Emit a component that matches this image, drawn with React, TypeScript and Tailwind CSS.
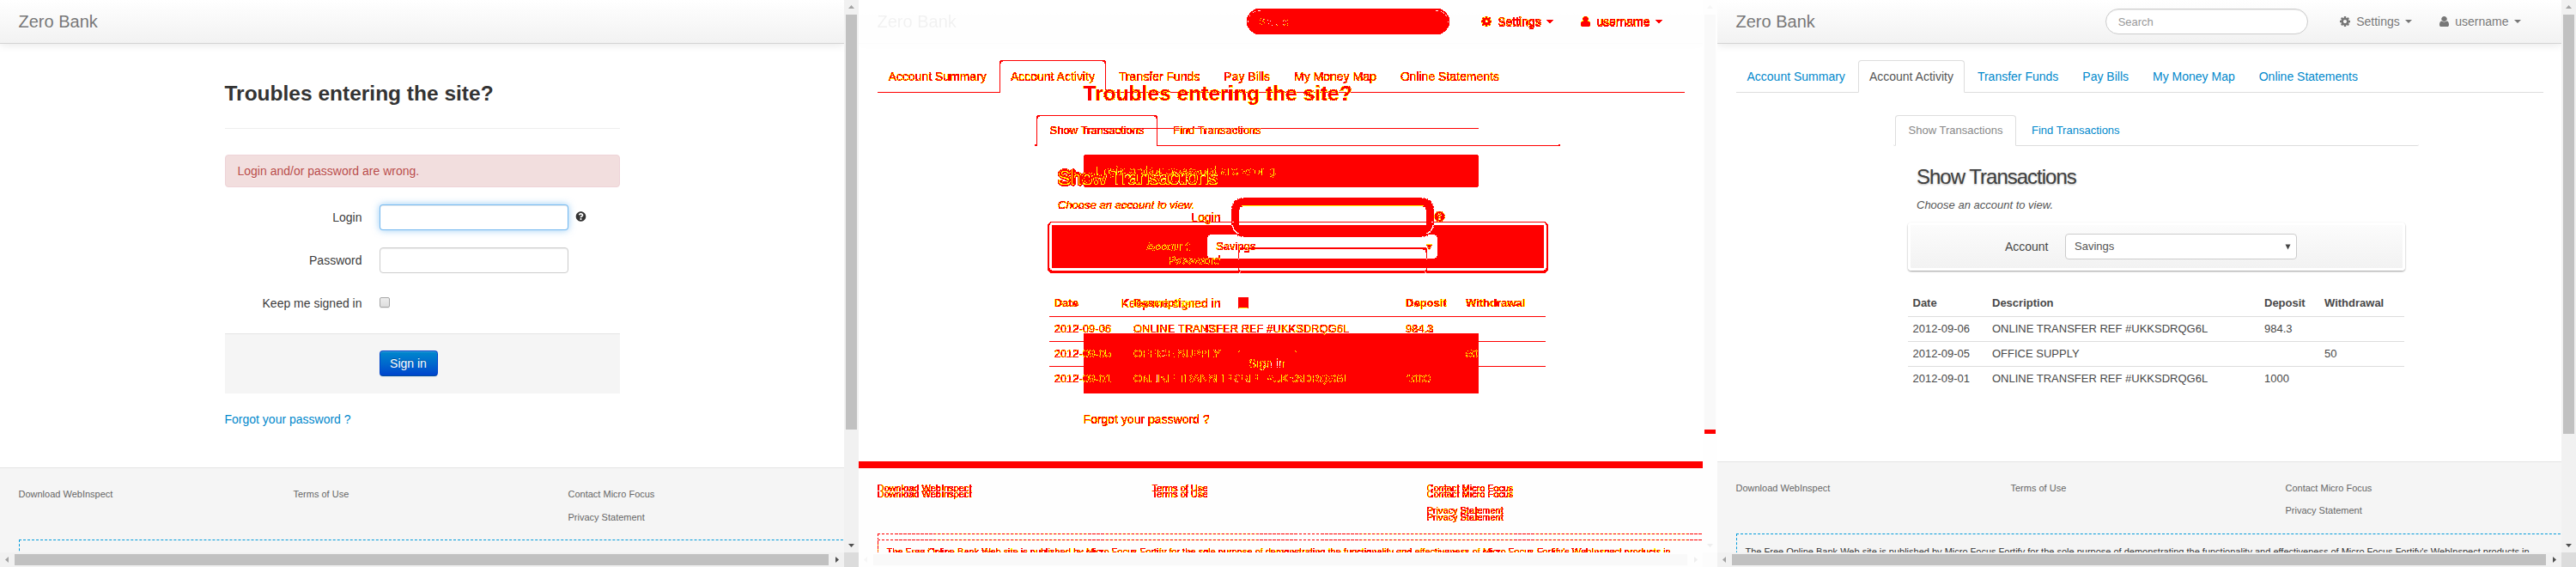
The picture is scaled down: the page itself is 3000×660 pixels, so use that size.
import React from "react";
import { FaQuestionCircle } from "react-icons/fa";

function CogIcon() {
  return (
    <svg viewBox="0 128 1536 1536" className="h-[12px] w-[12px]" fill="currentColor">
      <path d="M1024 896q0-106-75-181t-181-75-181 75-75 181 75 181 181 75 181-75 75-181zm512-109v222q0 12-8 23t-20 13l-185 28q-19 54-39 91 35 50 107 138 10 12 10 25t-9 23q-27 37-99 108t-94 71q-12 0-26-9l-138-108q-44 23-91 38-16 136-29 186-7 28-36 28h-222q-14 0-24.5-8.5t-11.5-21.5l-28-184q-49-16-90-37l-141 107q-10 9-25 9-14 0-25-11-126-114-165-168-7-10-7-23 0-12 8-23 15-21 51-66.5t54-70.5q-27-50-41-99l-183-27q-13-2-21-12.5t-8-23.5v-222q0-12 8-23t19-13l186-28q14-46 39-92-40-57-107-138-10-12-10-24 0-10 9-23 26-36 98.5-107.5t94.5-71.5q13 0 26 10l138 107q44-23 91-38 16-136 29-186 7-28 36-28h222q14 0 24.5 8.5t11.5 21.5l28 184q49 16 90 37l142-107q9-9 24-9 13 0 25 10 129 119 165 170 7 8 7 22 0 12-8 23-15 21-51 66.5t-54 70.5q26 50 41 98l183 28q13 2 21 12.5t8 23.5z" />
    </svg>
  );
}

function UserIcon() {
  return (
    <svg viewBox="0 128 1280 1536" className="h-[12px] w-[11px]" preserveAspectRatio="none" fill="currentColor">
      <path d="M1280 1399q0 109-62.5 187t-150.5 78h-854q-88 0-150.5-78t-62.5-187q0-85 8.5-160.5t31.5-152 58.5-131 94-89 134.5-34.5q131 128 313 128t313-128q76 0 134.5 34.5t94 89 58.5 131 31.5 152 8.5 160.5zm-256-887q0 159-112.5 271.5t-271.5 112.5-271.5-112.5-112.5-271.5 112.5-271.5 271.5-112.5 271.5 112.5 112.5 271.5z" />
    </svg>
  );
}

function Caret() {
  return <span className="h-0 w-0 border-x-4 border-t-4 border-x-transparent border-t-[#777]" />;
}

function Arrow({ points, dim }: { points: string; dim?: boolean }) {
  return (
    <svg viewBox="0 0 17 17" className="h-[17px] w-[17px] shrink-0">
      <polygon points={points} fill={dim ? "#a3a3a3" : "#505050"} />
    </svg>
  );
}

/* Browser window: content area plus both scroll bars. */
function Viewport({ children, long }: { children: React.ReactNode; long?: boolean }) {
  return (
    <div className="grid h-[660px] w-[1000px] shrink-0 grid-cols-[983px_17px] grid-rows-[643px_17px] bg-white font-['Liberation_Sans',Arial,sans-serif] text-[14px] leading-[20px] text-[#3c3c3c]">
      <div className="flex flex-col overflow-hidden bg-white">{children}</div>
      <div className="flex flex-col bg-[#f1f1f1]">
        <Arrow points="5,10 12,10 8.5,6" dim />
        <div className={long ? "mx-[2px] h-[488px] bg-[#c1c1c1]" : "mx-[2px] h-[483px] bg-[#c1c1c1]"} />
        <div className="flex-1" />
        <Arrow points="5,7 12,7 8.5,11" />
      </div>
      <div className="flex items-center bg-[#f1f1f1]">
        <Arrow points="10,5 10,12 6,8.5" dim />
        <div className="h-[13px] w-[948px] bg-[#c1c1c1]" />
        <div className="flex-1" />
        <Arrow points="7,5 7,12 11,8.5" />
      </div>
      <div className="bg-[#dcdcdc]" />
    </div>
  );
}

function Navbar({ children }: { children?: React.ReactNode }) {
  return (
    <header className="h-[51px] shrink-0 border-b border-[#d4d4d4] bg-linear-to-b from-white to-[#f2f2f2] text-[#777] shadow-[0_1px_10px_rgba(0,0,0,0.1)] [text-shadow:0_1px_0_#fff]">
      <div className="mx-auto flex h-[50px] w-[940px] items-center">
        <span className="text-[20px]">Zero Bank</span>
        {children}
      </div>
    </header>
  );
}

function Footer({ gap, notice }: { gap: string; notice: string }) {
  return (
    <footer className="flex-1 shrink-0 border-t border-[#e5e5e5] bg-[#f5f5f5] pt-[20px] pl-[21.5px] text-[11px] text-[#666]">
      <div className="flex">
        <span className="w-[320px]">Download WebInspect</span>
        <span className="w-[320px]">Terms of Use</span>
        <div className={`flex flex-col ${gap}`}>
          <span>Contact Micro Focus</span>
          <span>Privacy Statement</span>
        </div>
      </div>
      <p className={`h-[90px] w-[1000px] border border-dashed border-[#049cdb] p-[10px] whitespace-nowrap text-[#333] ${notice}`}>
        The Free Online Bank Web site is published by Micro Focus Fortify for the sole purpose of demonstrating the
        functionality and effectiveness of Micro Focus Fortify's WebInspect products in
      </p>
    </footer>
  );
}

function LoginPage() {
  return (
    <Viewport>
      <Navbar />
      <main className="mx-auto h-[493px] w-[460px] shrink-0 pt-[38px]">
        <h3 className="text-[24.5px] leading-[40px] font-bold text-[#333]">Troubles entering the site?</h3>
        <div className="mt-5 h-px bg-[#eee]" />
        <div className="mt-[30px] rounded border border-[#eed3d7] bg-[#f2dede] px-[14px] py-2 text-[#b94a48] [text-shadow:0_1px_0_rgba(255,255,255,0.5)]">
          Login and/or password are wrong.
        </div>
        <div className="mt-5 flex h-[30px] items-center">
          <label className="mr-5 w-[160px] text-right">Login</label>
          <input
            readOnly
            className="h-[30px] w-[220px] rounded border border-[#52a8ec]/80 bg-white shadow-[inset_0_1px_1px_rgba(0,0,0,0.075),0_0_8px_rgba(82,168,236,0.6)]"
          />
          <FaQuestionCircle className="mb-[2px] ml-2 h-[12px] w-[13px] text-[#333]" />
        </div>
        <div className="mt-5 flex h-[30px] items-center">
          <label className="mr-5 w-[160px] text-right">Password</label>
          <input
            readOnly
            className="h-[30px] w-[220px] rounded border border-[#ccc] bg-white shadow-[inset_0_1px_1px_rgba(0,0,0,0.075)]"
          />
        </div>
        <div className="mt-5 flex h-[30px] items-center">
          <label className="mr-5 w-[160px] text-right">Keep me signed in</label>
          <span className="mb-[3px] h-[12px] w-[12px] rounded-[2px] border border-[#a6a6a6] bg-linear-to-b from-[#ededed] to-[#dedede] shadow-[0_1px_0_rgba(0,0,0,0.08)]" />
        </div>
        <div className="mt-5 h-[70px] border-t border-[#e5e5e5] bg-[#f5f5f5] pt-[19px] pl-[180px]">
          <button className="block h-[30px] w-[68px] rounded border border-[#04c] border-b-[#002a80]/60 bg-linear-to-b from-[#08c] to-[#04c] text-white shadow-[inset_0_1px_0_rgba(255,255,255,0.2),0_1px_2px_rgba(0,0,0,0.05)] [text-shadow:0_-1px_0_rgba(0,0,0,0.25)]">
            Sign in
          </button>
        </div>
        <a className="mt-5 block text-[#08c]">Forgot your password ?</a>
      </main>
      <Footer gap="gap-[7px]" notice="mt-[16px]" />
    </Viewport>
  );
}

const tabs = ["Account Summary", "Account Activity", "Transfer Funds", "Pay Bills", "My Money Map", "Online Statements"];

const rows = [
  ["2012-09-06", "ONLINE TRANSFER REF #UKKSDRQG6L", "984.3", ""],
  ["2012-09-05", "OFFICE SUPPLY", "", "50"],
  ["2012-09-01", "ONLINE TRANSFER REF #UKKSDRQG6L", "1000", ""],
];

function AccountPage() {
  return (
    <Viewport long>
      <Navbar>
        <input
          readOnly
          placeholder="Search"
          className="ml-auto h-[30px] w-[236px] rounded-[15px] border border-[#ccc] bg-white px-[14px] text-[13px] shadow-[inset_0_1px_1px_rgba(0,0,0,0.075)] placeholder:text-[#999] [text-shadow:none]"
        />
        <div className="ml-[37.5px] flex items-center">
          <CogIcon />
          <span className="mr-[6px] ml-[7px]">Settings</span>
          <Caret />
        </div>
        <div className="mr-[26px] ml-[32px] flex items-center">
          <UserIcon />
          <span className="mr-[6px] ml-[7.5px]">username</span>
          <Caret />
        </div>
      </Navbar>
      <main className="mx-auto h-[486px] w-[940px] shrink-0 pt-[19px] text-[#484848]">
        <nav className="flex h-[38px] border-b border-[#ddd]">
          {tabs.map((tab) => (
            <a
              key={tab}
              className={
                tab === "Account Activity"
                  ? "mr-[2px] h-[38px] rounded-t border border-[#ddd] border-b-white bg-white px-3 py-2 text-[#555]"
                  : "mr-[2px] h-[38px] border border-transparent px-3 py-2 text-[#08c]"
              }
            >
              {tab}
            </a>
          ))}
        </nav>
        <div className="mt-[26px] ml-[182.5px] w-[614px]">
          <nav className="mx-[1px] flex h-[36px] rounded-b-[2px] border-b border-[#ddd] pl-[2px] text-[13px]">
            <a className="h-[36px] w-[141px] rounded-t border border-[#ddd] border-b-white bg-white py-[7px] text-center text-[#888]">
              Show Transactions
            </a>
            <a className="h-[36px] px-[18px] py-2 text-[#08c]">Find Transactions</a>
          </nav>
          <section className="mr-[18px] ml-[18px]">
            <h2 className="mt-[18px] ml-[10px] text-[24px] leading-[36px] tracking-[-1px] text-[#404040] [text-shadow:0_1px_2px_rgba(0,0,0,0.3)]">
              Show Transactions
            </h2>
            <p className="mt-[5px] ml-[10px] text-[13px] text-[#555] italic">Choose an account to view.</p>
            <div className="mt-[10px] flex h-[56px] w-[579px] items-center rounded border-[3px] border-white bg-linear-to-b from-[#fcfcfc] to-[#f2f2f2] bg-clip-padding shadow-[0_1px_2px_rgba(0,0,0,0.4)]">
              <label className="w-[160.5px] text-right">Account</label>
              <div className="ml-[19.5px] flex h-[30px] w-[270px] items-center justify-between rounded border border-[#ccc] bg-white pr-[6px] pl-[10px] text-[13px] text-[#555]">
                <span>Savings</span>
                <svg viewBox="0 0 7 7" className="h-[7px] w-[7px]">
                  <polygon points="0.5,0.5 6.5,0.5 3.5,6.5" fill="#444" />
                </svg>
              </div>
            </div>
            <table className="mt-6 w-[578px] table-fixed border-collapse text-left text-[13px]">
              <colgroup>
                <col className="w-[92.5px]" />
                <col className="w-[317px]" />
                <col className="w-[70px]" />
                <col className="w-[98.5px]" />
              </colgroup>
              <thead>
                <tr className="h-[29px]">
                  {["Date", "Description", "Deposit", "Withdrawal"].map((h) => (
                    <th key={h} className="px-[5.5px] py-1 font-bold">
                      {h}
                    </th>
                  ))}
                </tr>
              </thead>
              <tbody>
                {rows.map((row) => (
                  <tr key={row[0]} className="h-[29px] border-t border-[#ddd]">
                    {row.map((cell, i) => (
                      <td key={i} className="px-[5.5px] py-1 whitespace-nowrap">
                        {cell}
                      </td>
                    ))}
                  </tr>
                ))}
              </tbody>
            </table>
          </section>
        </div>
      </main>
      <Footer gap="gap-[6px]" notice="mt-[17px]" />
    </Viewport>
  );
}

/*
 * Pixel comparison of two pages. The first page is carried in the red channel and
 * the second in the green one; the filter paints changed pixels red, anti-aliased
 * changes yellow, and everything else as a faded version of the second page.
 */
function DiffFilters() {
  return (
    <svg width="0" height="0" className="absolute">
      <defs>
        <filter id="to-red" x="0" y="0" width="100%" height="100%" colorInterpolationFilters="sRGB">
          <feColorMatrix values="0.299 0.587 0.114 0 0  0 0 0 0 0  0 0 0 0 0  0 0 0 0 1" />
        </filter>
        <filter id="to-green" x="0" y="0" width="100%" height="100%" colorInterpolationFilters="sRGB">
          <feColorMatrix values="0 0 0 0 0  0.299 0.587 0.114 0 0  0 0 0 0 0  0 0 0 0 1" />
        </filter>
        <filter id="pixel-diff" x="0" y="0" width="100%" height="100%" colorInterpolationFilters="sRGB">
          <feColorMatrix in="SourceGraphic" result="faded" values="0 0.1 0 0 0.9  0 0.1 0 0 0.9  0 0.1 0 0 0.9  0 0 0 0 1" />
          <feColorMatrix in="SourceGraphic" values="40 -40 0 0 -0.2  -40 40 0 0 -0.2  0 0 0 0 0  0 0 0 0 1" />
          <feColorMatrix result="changed" values="0 0 0 0 1  0 0 0 0 0  0 0 0 0 0  255 255 0 0 0" />
          <feColorMatrix in="SourceGraphic" result="inverse" values="-1 0 0 0 1  0 -1 0 0 1  0 0 0 0 0  0 0 0 0 1" />
          <feMorphology in="SourceGraphic" operator="dilate" radius="1" result="brightest" />
          <feMorphology in="inverse" operator="dilate" radius="1" result="darkest" />
          <feComposite in="brightest" in2="inverse" operator="arithmetic" k1="0" k2="0.5" k3="0.5" k4="0" />
          <feColorMatrix result="up" values="255 0 0 0 -135  0 255 0 0 -135  0 0 0 0 0  0 0 0 0 1" />
          <feComposite in="darkest" in2="SourceGraphic" operator="arithmetic" k1="0" k2="0.5" k3="0.5" k4="0" />
          <feColorMatrix result="down" values="255 0 0 0 -160  0 255 0 0 -160  0 0 0 0 0  0 0 0 0 1" />
          <feComposite in="up" in2="down" operator="arithmetic" k1="1" k2="0" k3="0" k4="0" />
          <feColorMatrix result="soft" values="0 0 0 0 1  0 0 0 0 1  0 0 0 0 0  255 255 0 0 0" />
          <feComposite in="soft" in2="changed" operator="in" result="softChanged" />
          <feMerge>
            <feMergeNode in="faded" />
            <feMergeNode in="changed" />
            <feMergeNode in="softChanged" />
          </feMerge>
        </filter>
      </defs>
    </svg>
  );
}

function DiffPanel() {
  return (
    <div className="isolate grid h-[660px] w-[1000px] shrink-0 overflow-hidden [filter:url(#pixel-diff)]">
      <div className="col-start-1 row-start-1 [filter:url(#to-red)]">
        <LoginPage />
      </div>
      <div className="col-start-1 row-start-1 mix-blend-screen [filter:url(#to-green)]">
        <AccountPage />
      </div>
    </div>
  );
}

export default function App() {
  return (
    <div className="flex h-[660px] w-[3000px] overflow-hidden bg-white">
      <DiffFilters />
      <LoginPage />
      <DiffPanel />
      <AccountPage />
    </div>
  );
}
